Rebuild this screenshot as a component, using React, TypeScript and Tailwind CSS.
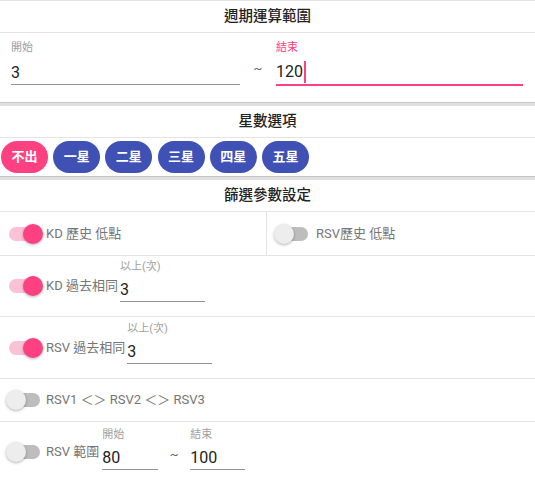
import React from 'react';

const Toggle = ({on}: {on: boolean}) => (
    <div className="relative w-[40px] h-[20px] shrink-0">
        <div
            className={on
                ? 'absolute left-[3px] top-[3px] w-[31px] h-[14px] rounded-full bg-[#fbc2d5]'
                : 'absolute left-[3px] top-[3px] w-[31px] h-[14px] rounded-full bg-[#bdbdbd]'}/>
        <div
            className={on
                ? 'absolute top-0 left-[17px] w-[20px] h-[20px] rounded-full bg-[#ff4081] shadow-[0_1px_3px_rgba(0,0,0,0.3)]'
                : 'absolute top-0 left-0 w-[20px] h-[20px] rounded-full bg-[#ededed] shadow-[0_1px_3px_rgba(0,0,0,0.3)]'}/>
    </div>
);

const Field = ({label, value, className}: {label: string, value: string, className: string}) => (
    <div className={`flex flex-col ${className}`}>
        <span className="text-[11px] leading-[13px] text-[#a0a0a0]">{label}</span>
        <div className="mt-[4px] h-[25px] leading-[25px] text-[16px] text-[#222] border-b border-[#949494]">
            {value}
        </div>
    </div>
);

const Band = () => <div className="h-[4px] bg-[#dfdfdf] border-t border-[#c6c6c6]"/>;

const Title = ({text}: {text: string}) => (
    <div
        className="h-[32px] flex items-center justify-center text-[14.5px] font-medium text-[#222] border-b border-[#e4e4e4]">
        {text}
    </div>
);

const stars = ['一星', '二星', '三星', '四星', '五星'];

export default function App() {
    return (
        <div className="w-[535px] h-[479px] overflow-hidden bg-white font-['Roboto','Noto_Sans_CJK_TC',sans-serif]">

            {/* 週期運算範圍 */}
            <div className="border-t border-[#e4e4e4]">
                <Title text="週期運算範圍"/>
                <div className="h-[69px] flex items-start pl-[11px] pr-[12px] pt-[8px]">
                    <div className="w-[229px] flex flex-col">
                        <span className="text-[11px] leading-[13px] text-[#a0a0a0]">開始</span>
                        <div className="mt-[6px] h-[25px] leading-[25px] text-[16px] text-[#222] border-b border-[#949494]">3</div>
                    </div>
                    <span className="w-[36px] text-center mt-[18px] text-[13px] text-[#666]">~</span>
                    <div className="flex-1 flex flex-col">
                        <span className="text-[11px] leading-[13px] text-[#ff4081]">結束</span>
                        <div
                            className="mt-[6px] h-[26px] flex items-center text-[16px] text-[#222] border-b-2 border-[#ff4081]">
                            120
                            <span className="ml-[1px] w-[2px] h-[22px] bg-[#ff4081]"/>
                        </div>
                    </div>
                </div>
            </div>

            <Band/>

            {/* 星數選項 */}
            <div>
                <Title text="星數選項"/>
                <div className="h-[38px] flex items-center gap-[5.2px] pl-[1px]">
                    <div
                        className="w-[47px] h-[32px] rounded-full bg-[#ff4081] text-white text-[13px] font-bold flex items-center justify-center">
                        不出
                    </div>
                    {stars.map(s => (
                        <div key={s}
                             className="w-[47px] h-[32px] rounded-full bg-[#3f51b5] text-white text-[13px] font-bold flex items-center justify-center">
                            {s}
                        </div>
                    ))}
                </div>
            </div>

            <Band/>

            {/* 篩選參數設定 */}
            <div>
                <Title text="篩選參數設定"/>

                <div className="h-[44px] flex border-b border-[#e4e4e4]">
                    <div className="w-[266px] flex items-center pl-[6px]">
                        <Toggle on/>
                        <span className="text-[13px] text-[#757575]">KD 歷史 低點</span>
                    </div>
                    <div className="flex-1 flex items-center pl-[7px] border-l border-[#e4e4e4]">
                        <Toggle on={false}/>
                        <span className="ml-[2px] text-[13px] text-[#757575]">RSV歷史 低點</span>
                    </div>
                </div>

                <div className="h-[61px] flex items-center pl-[6px] border-b border-[#e4e4e4]">
                    <Toggle on/>
                    <span className="text-[13px] text-[#757575]">KD 過去相同</span>
                    <Field label="以上(次)" value="3" className="w-[85px] ml-[2px] self-start mt-[4px]"/>
                </div>

                <div className="h-[62px] flex items-center pl-[6px] border-b border-[#e4e4e4]">
                    <Toggle on/>
                    <span className="text-[13px] text-[#757575]">RSV 過去相同</span>
                    <Field label="以上(次)" value="3" className="w-[85px] ml-[2px] self-start mt-[5px]"/>
                </div>

                <div className="h-[43px] flex items-center pl-[6px] border-b border-[#e4e4e4]">
                    <Toggle on={false}/>
                    <span className="text-[13px] text-[#757575]">RSV1 ＜＞ RSV2 ＜＞ RSV3</span>
                </div>

                <div className="h-[60px] flex items-center pl-[6px]">
                    <Toggle on={false}/>
                    <span className="text-[13px] text-[#757575]">RSV 範圍</span>
                    <Field label="開始" value="80" className="w-[56px] ml-[3px] self-start mt-[6px]"/>
                    <span className="w-[32px] text-center text-[13px] text-[#666] mt-[6px]">~</span>
                    <Field label="結束" value="100" className="w-[55px] self-start mt-[6px]"/>
                </div>
            </div>
        </div>
    );
}
